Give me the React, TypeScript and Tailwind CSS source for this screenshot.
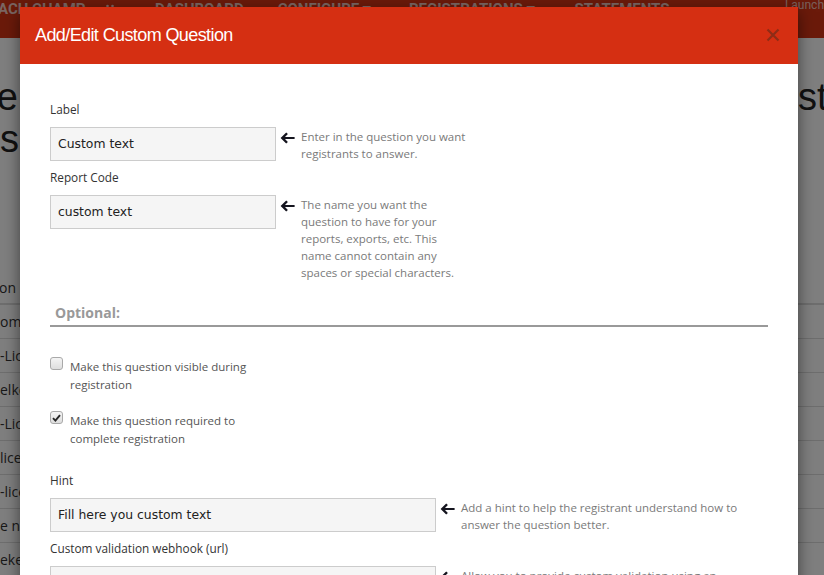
import React from 'react';

const Arrow: React.FC = () => (
  <svg width="15" height="12" viewBox="0 0 15 12" className="shrink-0 mt-[5px]">
    <path d="M6.2 0.4 L7.9 2.1 L5 4.9 H14.6 V7.1 H5 L7.9 9.9 L6.2 11.6 L0.6 6 Z" fill="#15151f" />
  </svg>
);

const Checkbox: React.FC<{ checked?: boolean }> = ({ checked }) => (
  <span className="mt-[-1px] w-[13px] h-[13px] shrink-0 rounded-[3px] border border-[#a9a9a9] bg-gradient-to-b from-[#f4f4f4] to-[#dedede] flex items-center justify-center">
    {checked && (
      <svg width="9" height="8" viewBox="0 0 9 8">
        <path d="M1 4.2 L3.4 6.6 L8 1.2" stroke="#262626" strokeWidth="1.9" fill="none" />
      </svg>
    )}
  </span>
);

const Field: React.FC<{ label: string; value: string; wide?: boolean; help: string; helpWidth: string }> = ({ label, value, wide, help, helpWidth }) => (
  <div>
    <div className="text-[11.8px] leading-[18px] text-[#333]">{label}</div>
    <div className="flex items-start mt-[9px]">
      <div
        className={`${wide ? 'w-[386px]' : 'w-[226px]'} h-[34px] shrink-0 bg-[#f5f5f5] border border-[#cccccc] px-[7px] flex items-center text-[12.4px] text-[#222]`}
        style={{ fontFamily: '"DejaVu Sans", Verdana, sans-serif' }}
      >
        {value}
      </div>
      <div className="ml-[4px]">
        <Arrow />
      </div>
      <div className={`ml-[6px] ${helpWidth} pt-[1px] text-[11.5px] leading-[17px] text-[#7a7a7a]`}>{help}</div>
    </div>
  </div>
);

const rows = ['om _', '-Lic', 'elke', '-Lic', 'licen', '-lice', 'e na', 'eker'];

export default function App() {
  return (
    <div className="relative w-[824px] h-[575px] overflow-hidden bg-white" style={{ fontFamily: '"Open Sans", sans-serif' }}>
      {/* page behind the dialog */}
      <div className="h-[38px] bg-[#d63414] flex items-start text-[15px] font-bold text-white/75 uppercase whitespace-nowrap" style={{ fontFamily: 'Roboto, sans-serif' }}>
        <span className="mt-[-2px] w-[86px] overflow-hidden">
          <span className="ml-[-22px]">COACH CHAMPIONS</span>
        </span>
        <svg width="8" height="8" viewBox="0 0 8 8" className="ml-[20px] mt-[3px] shrink-0">
          <circle cx="1.5" cy="3" r="1.3" fill="rgba(255,255,255,0.75)" />
          <circle cx="6.5" cy="3" r="1.3" fill="rgba(255,255,255,0.75)" />
        </svg>
        <span className="mt-[-2px] ml-[41px]">DASHBOARD</span>
        <span className="mt-[-2px] ml-[34px]">CONFIGURE ▾</span>
        <span className="mt-[-2px] ml-[38px]">REGISTRATIONS ▾</span>
        <span className="mt-[-2px] ml-[40px]">STATEMENTS</span>
        <span className="ml-auto mt-[-4px] text-[12px] font-normal normal-case text-white/70">Launch</span>
      </div>
      <div className="text-[38px] leading-[42px] text-[#222] pt-[38px]" style={{ fontFamily: '"Liberation Sans", Arial, sans-serif' }}>
        <div className="flex">
          <div className="w-[18px] overflow-hidden flex justify-end">
            <span className="whitespace-nowrap">Manage</span>
          </div>
          <div className="ml-auto w-[26px] overflow-hidden whitespace-nowrap">stom</div>
        </div>
        <div className="w-[19px] overflow-hidden flex justify-end">
          <span className="whitespace-nowrap">Questions</span>
        </div>
      </div>
      <div className="mt-[111px] text-[14px] text-[#333]">
        <div className="h-[34px] leading-[34px] border-b-2 border-[#ddd]">
          <div className="w-[16px] flex justify-end whitespace-nowrap overflow-hidden">
            <span>Question</span>
          </div>
        </div>
        {rows.map((r, i) => (
          <div key={i} className="h-[34px] border-b border-[#ddd] flex items-center">
            <span className="whitespace-nowrap">{r}</span>
          </div>
        ))}
      </div>

      <div className="absolute inset-0 bg-black/50" />

      {/* dialog */}
      <div className="absolute left-[20px] top-[7px] w-[778px] h-[620px] bg-white shadow-[0_5px_15px_rgba(0,0,0,0.5)]">
        <div className="h-[57px] bg-[#d52f12] flex items-center justify-between pl-[15px] pr-[18px]">
          <h4 className="text-[18px] text-white tracking-[-0.6px] mt-[-1px]" style={{ fontFamily: '"Liberation Sans", Arial, sans-serif' }}>
            Add/Edit Custom Question
          </h4>
          <svg width="14" height="14" viewBox="0 0 14 14" className="mt-[-1px]">
            <path d="M1.5 1.5 L12.5 12.5 M12.5 1.5 L1.5 12.5" stroke="#8e2c17" strokeWidth="2.2" />
          </svg>
        </div>

        <div className="pt-[36px] px-[30px]">
          <Field label="Label" value="Custom text" help="Enter in the question you want registrants to answer." helpWidth="w-[175px]" />
          <div className="mt-[6px]">
            <Field
              label="Report Code"
              value="custom text"
              help="The name you want the question to have for your reports, exports, etc. This name cannot contain any spaces or special characters."
              helpWidth="w-[160px]"
            />
          </div>

          <div className="mt-[22px] border-b-2 border-[#999] pb-[2px] pl-[5px] text-[14px] leading-[20px] font-bold text-[#999]">Optional:</div>

          <div className="mt-[31px] flex items-start">
            <Checkbox />
            <span className="ml-[7px] w-[190px] text-[11.5px] leading-[18px] text-[#555]">Make this question visible during registration</span>
          </div>
          <div className="mt-[18px] flex items-start">
            <Checkbox checked />
            <span className="ml-[7px] w-[190px] text-[11.5px] leading-[18px] text-[#555]">Make this question required to complete registration</span>
          </div>

          <div className="mt-[23px]">
            <Field
              label="Hint"
              value="Fill here you custom text"
              wide
              help="Add a hint to help the registrant understand how to answer the question better."
              helpWidth="w-[290px]"
            />
          </div>
          <div className="mt-[6px]">
            <Field
              label="Custom validation webhook (url)"
              value=""
              wide
              help="Allow you to provide custom validation using an external webhook."
              helpWidth="w-[290px]"
            />
          </div>
        </div>
      </div>
    </div>
  );
}
